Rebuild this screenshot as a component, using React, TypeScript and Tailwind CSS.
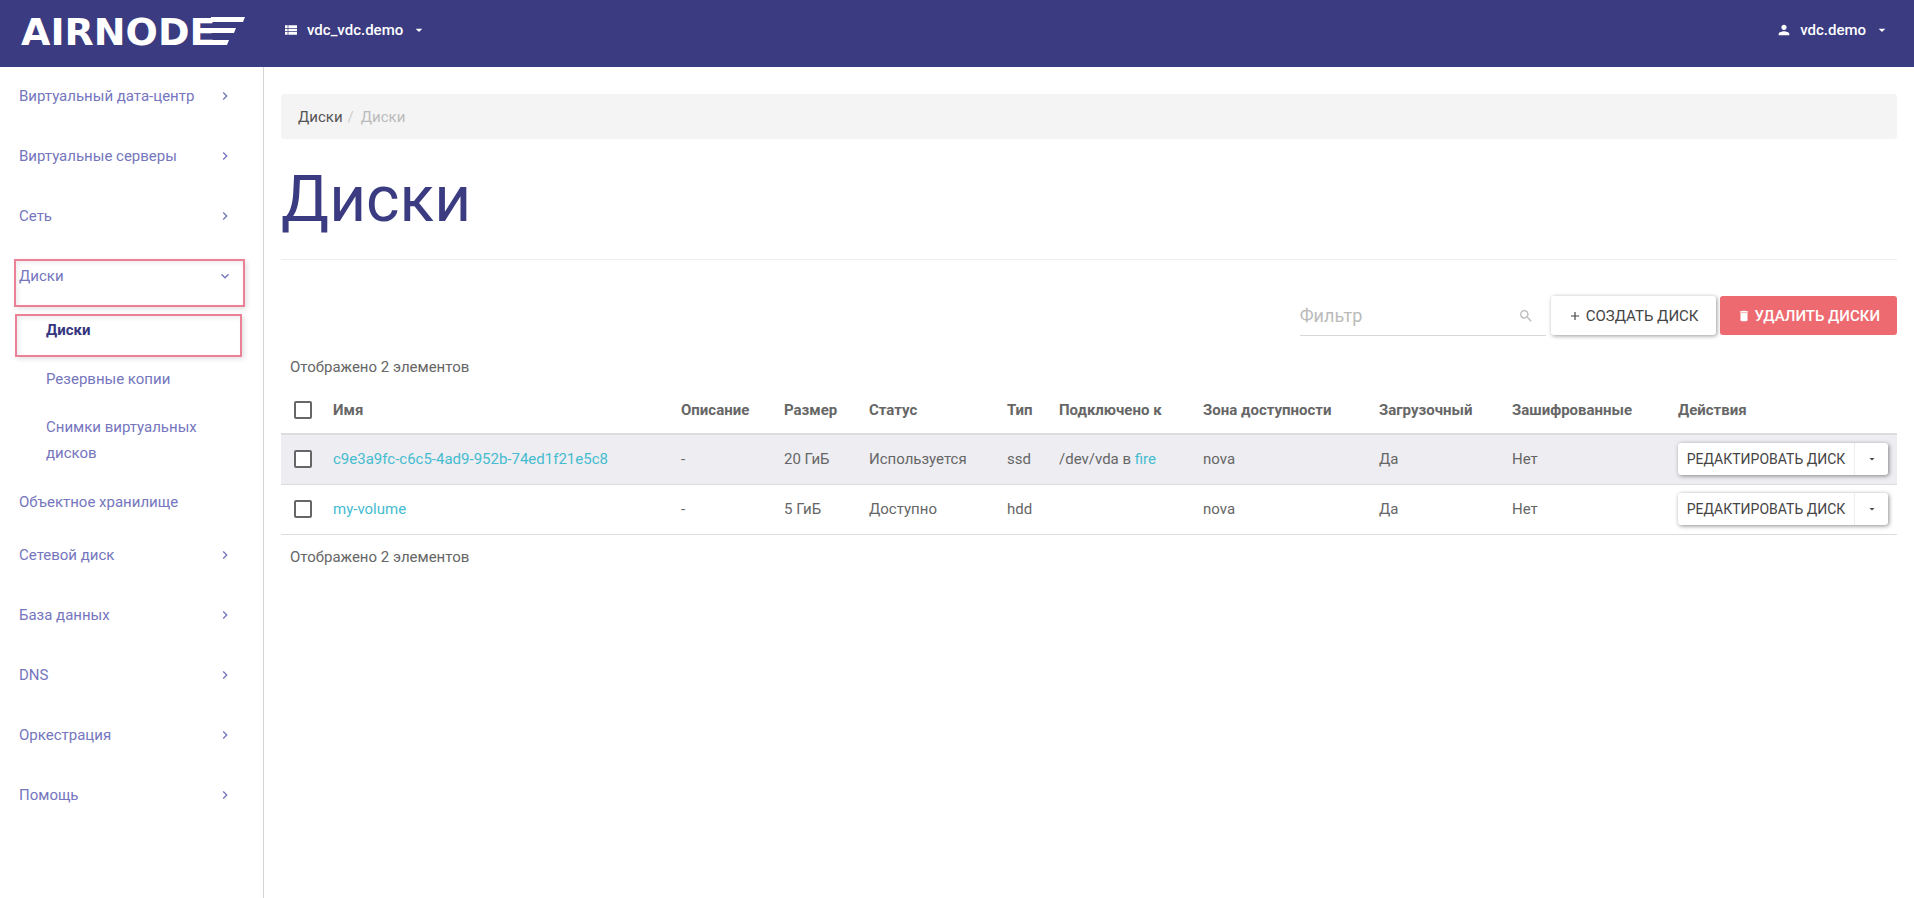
import React, { useState } from 'react'
import {
  MdAdd,
  MdArrowDropDown,
  MdChevronRight,
  MdDelete,
  MdExpandMore,
  MdPerson,
  MdSearch,
  MdViewList,
} from 'react-icons/md'

type Volume = {
  name: string
  size: string
  status: string
  type: string
  device?: string
  server?: string
  zone: string
}

const volumes: Volume[] = [
  { name: 'c9e3a9fc-c6c5-4ad9-952b-74ed1f21e5c8', size: '20 ГиБ', status: 'Используется', type: 'ssd', device: '/dev/vda', server: 'fire', zone: 'nova' },
  { name: 'my-volume', size: '5 ГиБ', status: 'Доступно', type: 'hdd', zone: 'nova' },
]

const checkboxClass =
  'block appearance-none w-[18px] h-[18px] border-2 border-[#666] rounded-xs bg-white checked:bg-[#666]'

function Logo() {
  return (
    <a href="/" className="flex items-center w-[263px] pl-[21px] pb-1 text-white">
      <span className="flex items-baseline">
        <span className="font-['DejaVu_Sans'] font-bold text-[38px] leading-[38px]">AIRNODE</span>
        {/* wing strokes that carry on the bars of the last letter */}
        <svg className="-ml-1" width="34" height="28" viewBox="0 0 34 28" fill="currentColor" aria-hidden="true">
          <path d="M0 0H34L32 5H0ZM0 11H25L23 16H0ZM0 23H18L16 28H0Z" />
        </svg>
      </span>
    </a>
  )
}

function Header() {
  return (
    <header className="flex h-[67px] bg-[#3a3b81] text-white font-medium">
      <Logo />
      <div className="flex flex-1 justify-between pl-5 pr-6 pb-[7px]">
        <button type="button" className="flex items-center">
          <MdViewList className="size-4 mr-2" />
          vdc_vdc.demo
          <MdArrowDropDown className="size-4 ml-2" />
        </button>
        <button type="button" className="flex items-center">
          <MdPerson className="size-4 mr-2" />
          vdc.demo
          <MdArrowDropDown className="size-4 ml-2" />
        </button>
      </div>
    </header>
  )
}

function NavGroup({ label, open = false }: { label: string; open?: boolean }) {
  return (
    <a href="#" className="relative flex items-center justify-between h-[60px] pl-[19px] pr-[30px] pb-[2px]">
      {label}
      {open ? <MdExpandMore className="size-4" /> : <MdChevronRight className="size-4" />}
      {open && (
        <span className="absolute left-[14px] right-[18px] top-[12px] h-12 border-2 border-[#ea8196] shadow-[2px_2px_5px_rgba(0,0,0,0.12),inset_2px_2px_5px_rgba(0,0,0,0.08)]"></span>
      )}
    </a>
  )
}

function Sidebar() {
  return (
    <nav className="w-[264px] shrink-0 border-r border-[#d5d5d8] text-[#7576bd]">
      <NavGroup label="Виртуальный дата-центр" />
      <NavGroup label="Виртуальные серверы" />
      <NavGroup label="Сеть" />
      <NavGroup label="Диски" open />
      <ul>
        <li className="relative pl-[46px] pt-[10px] pb-[13px]">
          <a href="#" className="font-bold text-[#35367f]">Диски</a>
          <span className="absolute left-[15px] right-[21px] top-[7px] h-[43px] border-2 border-[#ea8196] shadow-[2px_2px_5px_rgba(0,0,0,0.12),inset_2px_2px_5px_rgba(0,0,0,0.08)]"></span>
        </li>
        <li className="pl-[46px] pt-[10px] pb-3">
          <a href="#">Резервные копии</a>
        </li>
        <li className="pl-[46px] pr-14 pt-[10px] pb-[13px]">
          <a href="#">Снимки виртуальных дисков</a>
        </li>
      </ul>
      <a href="#" className="block pl-[19px] pt-[10px] pb-[11px]">Объектное хранилище</a>
      <NavGroup label="Сетевой диск" />
      <NavGroup label="База данных" />
      <NavGroup label="DNS" />
      <NavGroup label="Оркестрация" />
      <NavGroup label="Помощь" />
    </nav>
  )
}

function Toolbar() {
  const [filter, setFilter] = useState('')

  return (
    <div className="flex justify-end mt-9">
      <label className="flex items-center w-[246px] h-10 mr-[5px] pr-3 border-b border-[#d8d8d8]">
        <input
          type="text"
          aria-label="Фильтр"
          placeholder="Фильтр"
          value={filter}
          onChange={(e) => setFilter(e.target.value)}
          className="flex-1 min-w-0 text-lg outline-none placeholder:text-[#bbb]"
        />
        <MdSearch className="size-4 text-[#bbb]" />
      </label>
      <button type="button" className="flex items-center h-[39px] mr-1 px-[17px] rounded-[3px] bg-white uppercase text-[#444] shadow-[1px_1px_4px_rgba(0,0,0,0.4)]">
        <MdAdd className="size-[14px] mr-1" />
        Создать диск
      </button>
      <button type="button" className="flex items-center h-[39px] px-[17px] rounded-[3px] bg-[#ed6b70] uppercase font-medium text-white">
        <MdDelete className="size-[14px] mr-1" />
        Удалить диски
      </button>
    </div>
  )
}

function VolumesTable() {
  return (
    <table className="w-full table-fixed text-left">
      <thead>
        <tr className="h-12 border-b-2 border-[#dcdcde]">
          <th className="w-[43px] pl-[13px]">
            <input type="checkbox" aria-label="Выбрать все" className={checkboxClass} />
          </th>
          <th className="px-[9px]">Имя</th>
          <th className="w-[103px] px-[9px]">Описание</th>
          <th className="w-[85px] px-[9px]">Размер</th>
          <th className="w-[138px] px-[9px]">Статус</th>
          <th className="w-[52px] px-[9px]">Тип</th>
          <th className="w-[144px] px-[9px]">Подключено к</th>
          <th className="w-[176px] px-[9px]">Зона доступности</th>
          <th className="w-[133px] px-[9px]">Загрузочный</th>
          <th className="w-[166px] px-[9px]">Зашифрованные</th>
          <th className="w-[228px] px-[9px]">Действия</th>
        </tr>
      </thead>
      <tbody>
        {volumes.map((volume) => (
          <tr key={volume.name} className="h-[50px] border-b border-[#dcdcde] odd:bg-[#ededf2]">
            <td className="pl-[13px]">
              <input type="checkbox" aria-label={volume.name} className={checkboxClass} />
            </td>
            <td className="px-[9px]">
              <a href="#" className="text-[#45bccf]">{volume.name}</a>
            </td>
            <td className="px-[9px]">-</td>
            <td className="px-[9px]">{volume.size}</td>
            <td className="px-[9px]">{volume.status}</td>
            <td className="px-[9px]">{volume.type}</td>
            <td className="px-[9px]">
              {volume.server && (
                <>
                  {volume.device} в <a href="#" className="text-[#45bccf]">{volume.server}</a>
                </>
              )}
            </td>
            <td className="px-[9px]">{volume.zone}</td>
            <td className="px-[9px]">Да</td>
            <td className="px-[9px]">Нет</td>
            <td className="px-[9px]">
              <div className="flex h-8 rounded-[3px] bg-white text-[#444] shadow-[1px_1px_4px_rgba(0,0,0,0.45)]">
                <button type="button" className="flex-1 border-r border-[#eee] text-sm uppercase whitespace-nowrap">
                  Редактировать диск
                </button>
                <button type="button" aria-label="Другие действия" className="flex items-center justify-center w-[33px]">
                  <MdArrowDropDown className="size-3" />
                </button>
              </div>
            </td>
          </tr>
        ))}
      </tbody>
    </table>
  )
}

export default function App() {
  return (
    <div className="flex flex-col min-h-screen bg-white font-[Roboto,sans-serif] text-[15px] leading-[26px] text-[#666]">
      <Header />
      <div className="flex flex-1">
        <Sidebar />
        <main className="flex-1 min-w-0 px-[17px] pt-[27px]">
          <nav aria-label="Навигация">
            <ol className="flex h-[45px] items-center px-[17px] rounded-[3px] bg-[#f4f4f4]">
              <li><a href="#" className="text-[#555]">Диски</a></li>
              <li className="px-[5px] text-[#ccc]">/</li>
              <li className="pl-[2px] text-[#bbb]">Диски</li>
            </ol>
          </nav>
          <h1 className="mt-[25px] pb-[23px] border-b border-[#eee] text-[64px] leading-[72px] text-[#3a3b81]">Диски</h1>
          <Toolbar />
          <p className="mt-[18px] mb-[6px] ml-[9px]">Отображено 2 элементов</p>
          <VolumesTable />
          <p className="mt-[9px] ml-[9px]">Отображено 2 элементов</p>
        </main>
      </div>
    </div>
  )
}
